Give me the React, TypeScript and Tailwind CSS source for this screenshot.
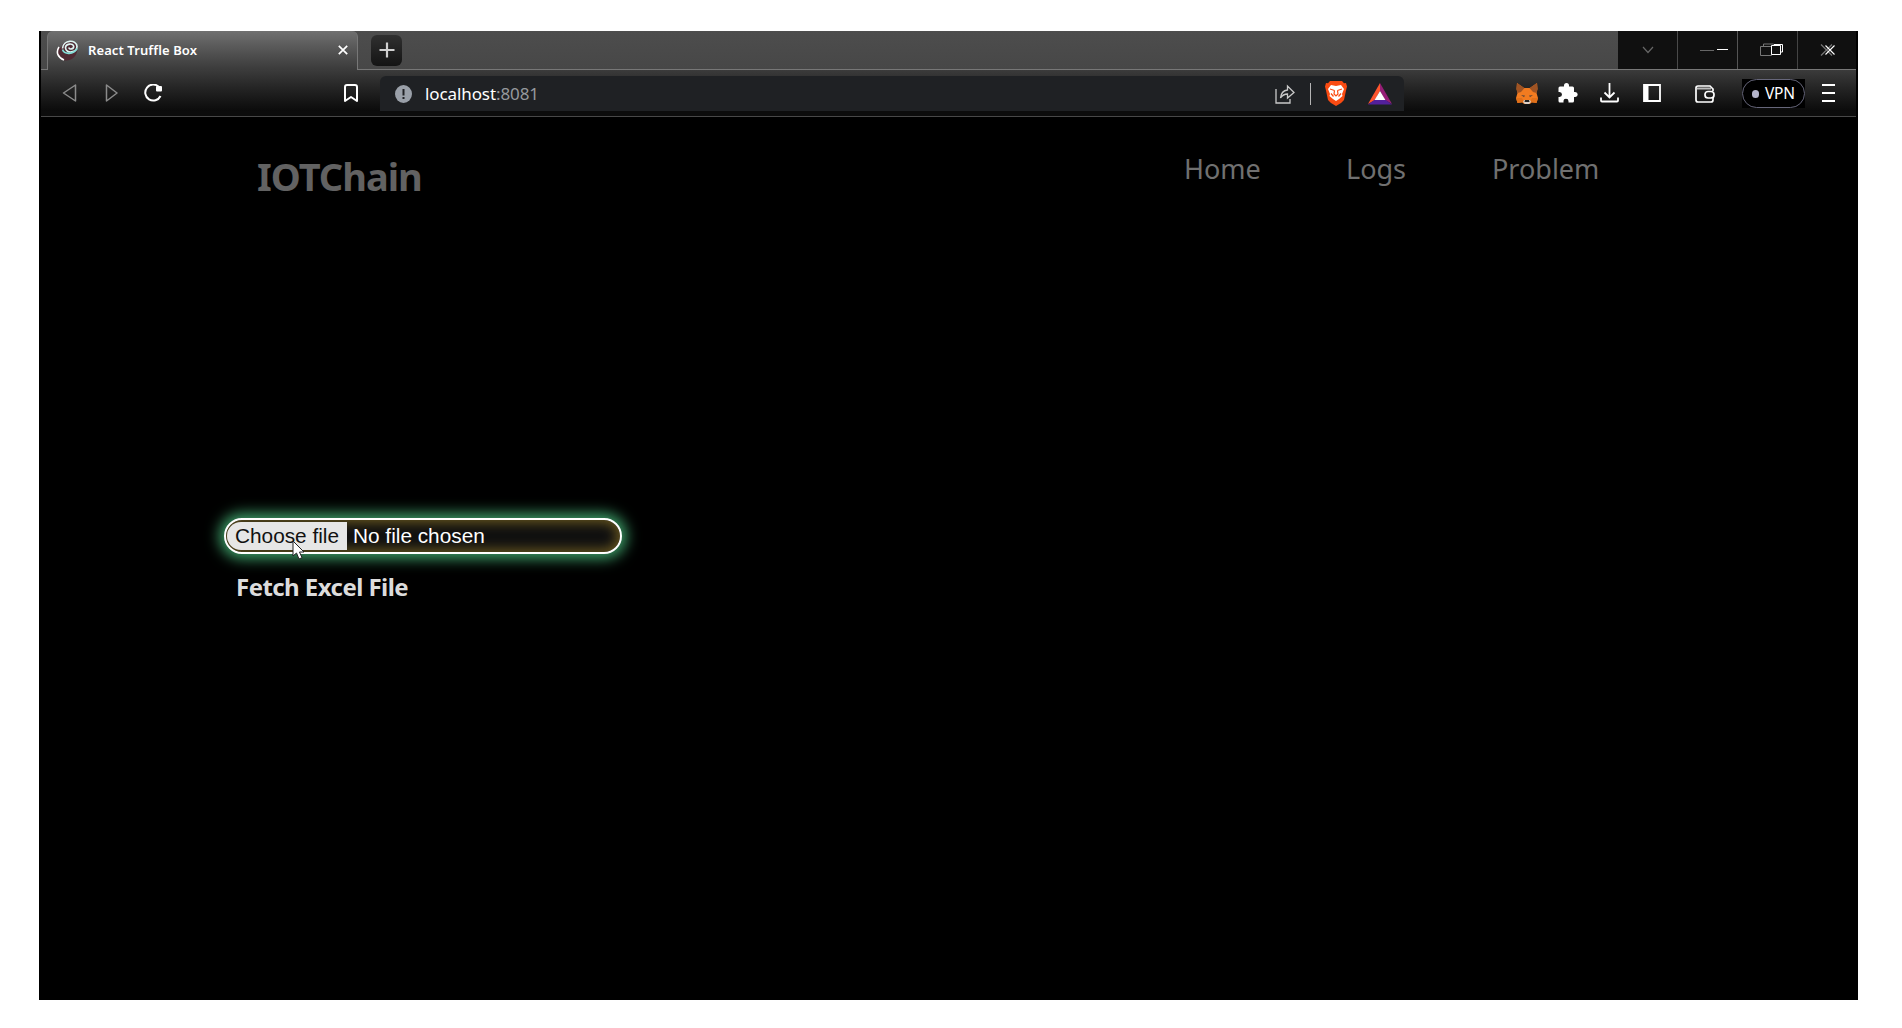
import React from "react";

const noto = "font-['Noto_Sans',sans-serif]";

function TruffleIcon() {
  return (
    <svg className="absolute left-[8px] top-[9px]" width="22" height="22" viewBox="0 0 22 22" fill="none">
      <path d="M1.500 8c-1.500 7 3.500 13 9 12.500 5 0 10-4 11-10.500l-2-5z" fill="#4f2a33" />
      <ellipse cx="13.500" cy="7.500" rx="8" ry="6.500" fill="#4f2a33" />
      <path d="M6.500 8.500c.5-9 14-9.500 14.500-2 .2 6.500-11 7.500-11.500 1.500-.3-4.500 8-5.500 8.200-1.500 0 3-4.700 3.200-4.700 1" stroke="#dff7f4" strokeWidth="1.700" />
      <path d="M6.500 9.500c2 5.500 11 5 14.500-1" stroke="#83ddd6" strokeWidth="1.700" />
      <path d="M3 7C-.5 12.500 2 17.500 8 20" stroke="#fff" strokeWidth="1.600" />
    </svg>
  );
}

function Tab() {
  return (
    <div className="relative ml-[6px] h-[39px] w-[311px] rounded-t-[6px] border-x border-[#777] bg-linear-to-b from-[#707070] to-[#3a3a3a]">
      <TruffleIcon />
      <div className="flex h-[38px] items-center justify-between pl-[40px] pr-[9px]">
        <span className={`${noto} text-[13px] font-semibold leading-none tracking-[0.1px] text-white`}>React Truffle Box</span>
        <svg width="10" height="10" viewBox="0 0 10 10" stroke="#fff" strokeWidth="1.700">
          <path d="M.8.8l8.400 8.400M9.200.8L.8 9.200" />
        </svg>
      </div>
    </div>
  );
}

function WindowControls() {
  return (
    <div className="ml-auto flex h-[38px] items-center bg-[#101010]">
      <div className="flex h-full w-[60px] items-center justify-center border-r border-[#4a4a4a]">
        <svg width="12" height="8" viewBox="0 0 12 8" fill="none" stroke="#666" strokeWidth="1.200"><path d="M1 1l5 5.500L11 1" /></svg>
      </div>
      <div className="flex h-full w-[60px] items-center justify-center border-r border-[#555] pl-[12px]">
        <svg width="30" height="6" viewBox="0 0 30 6"><path d="M1 3.500h14" stroke="#666" /><path d="M18 2.500h11" stroke="#fff" /></svg>
      </div>
      <div className="flex h-full w-[60px] items-center justify-center border-r border-[#444] pl-[8px]">
        <svg width="24" height="14" viewBox="0 0 24 14" fill="none">
          <path d="M.5 3.500h11v9H.5zM3.500 3v-2h10" stroke="#777" />
          <path d="M11.500 2.500h9v9h-9zM14 2V1.500h8.500v7.500H21" stroke="#fff" />
        </svg>
      </div>
      <div className="flex h-full w-[58px] items-center justify-center pl-[2px]">
        <svg width="17" height="12" viewBox="0 0 17 12">
          <path d="M1 .5l11 11M12 .5l-11 11" stroke="#777" strokeWidth="1.200" />
          <path d="M5.500 1.500l9 9M14.500 1.500l-9 9" stroke="#fff" strokeWidth="1.100" />
        </svg>
      </div>
    </div>
  );
}

function AddressBar() {
  return (
    <div className="flex h-[35px] w-[1024px] items-center rounded-t-[6px] bg-[#1f2124] pl-[15px]">
      <svg width="17" height="18" viewBox="0 0 17 18"><ellipse cx="8.500" cy="9" rx="8.500" ry="9" fill="#9aa0a9" /><path d="M8.500 4v6.500M8.500 12v2" stroke="#202125" strokeWidth="2" /></svg>
      <span className={`${noto} ml-[13px] inline-block w-[130px] text-[17px] leading-none tracking-[-0.1px] text-white`}>
        localhost<span className="text-[#96999d]">:8081</span>
      </span>
      <svg className="ml-[720px] mt-[1px]" width="20" height="20" viewBox="0 0 20 20" fill="none" stroke="#c9c9c9" strokeWidth="1.300">
        <path d="M1 5v14h14v-4" /><path d="M5.500 14c.5-5 3-7.500 7-8V2l6.500 6.500-6.500 5.500v-4c-3 0-5 1-7 4z" />
      </svg>
      <div className="ml-[15px] h-[22px] w-px bg-[#b5b5b5]" />
      <svg className="ml-[14px]" width="22" height="25" viewBox="0 0 22 25">
        <path d="M5 0h12l2 2.300 2-.2 1 3.400-1 4-2 9.500-3 3L11 25l-5-3-3-3L1 9.500l-1-4 1-3.400 2 .2z" fill="#fa4b12" />
        <path d="M6 4l5 1 5-1 3 4-2 5 .5 2-3.500 3L11 20l-3-2-3.500-3 .5-2-2-5z" fill="#fff" />
        <path d="M5 8l4.500 1.500M17 8l-4.500 1.500M9.500 9.500l-.5 3.500 2 2 2-2-.5-3.500M6 12.500l2.500 3M16 12.500l-2.500 3" stroke="#fa4b12" strokeWidth="1.200" fill="none" />
      </svg>
      <svg className="ml-[21px]" width="24" height="22" viewBox="0 0 24 22">
        <path d="M12 0L0 21l7-4 5-9z" fill="#ff552e" /><path d="M12 0l12 21-7-4-5-9z" fill="#961e77" /><path d="M0 21.500h24L17 16.500H7z" fill="#53209b" /><path d="M12 8l5.400 9H6.600z" fill="#fff" />
      </svg>
    </div>
  );
}

function Fox() {
  return (
    <svg className="ml-[112px]" width="22" height="21" viewBox="0 0 22 21">
      <path d="M1 0l7 5h6l7-5 .5 6-1 4 1.500 5-1.500 5-4.500-1-2 2H8l-2-2-4.500 1L0 15l1.500-5-1-4z" fill="#f27b20" />
      <path d="M1 0l7.500 5-3.500 4-3.500 1-1-4zM21 0l-7.500 5L17 9l3.500 1 1-4z" fill="#9f5323" />
      <path d="M5 12l4 .5-1 1.700zM17 12l-4 .5 1 1.700z" fill="#6b4a35" />
      <path d="M0 15h6l2 4-1 .5-5.500.5zM22 15h-6l-2 4 1 .5 5.500.5z" fill="#e0701a" />
      <path d="M8 17h6l1 2-2 2H9l-2-2z" fill="#dccfc6" /><path d="M9 17h4l.5 2h-5z" fill="#222" />
    </svg>
  );
}

function Toolbar() {
  return (
    <div className="flex h-[41px] items-center bg-linear-to-b from-[#3b3b3b] to-[#0b0b0b] pt-[6px]">
      <svg className="-mt-px ml-[21px]" width="16" height="18" viewBox="0 0 16 18" fill="none" stroke="#8b8b8b" strokeWidth="1.500" strokeLinejoin="round"><path d="M13.500 1v16L1.500 9z" /></svg>
      <svg className="-mt-px ml-[27px]" width="14" height="18" viewBox="0 0 14 18" fill="none" stroke="#8b8b8b" strokeWidth="1.500" strokeLinejoin="round"><path d="M1.500 1v16L12 9z" /></svg>
      <svg className="-mt-px ml-[25px]" width="19" height="19" viewBox="0 0 19 19" fill="none" stroke="#fff" strokeWidth="2"><path d="M15 3A8 8 0 1 0 16.500 12" /><rect x="12" y="2" width="6" height="5.500" rx="1" fill="#fff" stroke="none" /></svg>
      <svg className="-mt-px ml-[181px]" width="14" height="19" viewBox="0 0 14 19" fill="none" stroke="#fff" strokeWidth="2" strokeLinejoin="round"><path d="M1 3q0-2 2-2h8q2 0 2 2v14l-6-4-6 4z" /></svg>
      <div className="ml-[22px]"><AddressBar /></div>
      <Fox />
      <svg className="-mt-px ml-[19px]" width="21" height="20" viewBox="0 0 21 20" fill="#fff"><path d="M1.500 5q0-1.500 1.500-1.500h4V2.500a2.500 2.500 0 0 1 5 0v1h3.500q1.500 0 1.500 1.500v4h1.200a2.500 2.500 0 0 1 0 5H17v4q0 1.500-1.500 1.500h-4v-1.200a2.500 2.500 0 0 0-5 0v1.200H3q-1.500 0-1.500-1.500V14h1a2.500 2.500 0 0 0 0-5h-1z" /></svg>
      <svg className="-mt-px ml-[22px]" width="19" height="20" viewBox="0 0 19 20" fill="none" stroke="#fff" strokeWidth="1.800"><path d="M9.500 0v14M4.500 9.500l5 5 5-5M1 14.500v3q0 1 1 1h15q1 0 1-1v-3" /></svg>
      <svg className="-mt-px ml-[24px]" width="18" height="18" viewBox="0 0 18 18"><path d="M1 1h16v16H1z" fill="none" stroke="#fff" strokeWidth="1.800" /><path d="M1 1h4.500v16H1z" fill="#fff" /></svg>
      <svg className="ml-[34px]" width="20" height="18" viewBox="0 0 20 18" fill="none" stroke="#fff" strokeWidth="1.700"><path d="M18 6V4l-3-3H3Q1 1 1 3v12q0 2 2 2h13q2 0 2-2v-2" /><path d="M2 3.500h14" stroke="#bbb" strokeWidth="2" /><rect x="10" y="6.500" width="9" height="6.500" rx="3" /></svg>
      <div className="ml-[27px] flex h-[29px] w-[63px] shrink-0 bg-black">
        <div className={`${noto} flex h-full w-full items-center rounded-full border border-[#66667a] pl-[9px] text-[15.500px] leading-none tracking-[-0.2px] text-white`}>
          <span className="mr-[6px] h-[8px] w-[7px] shrink-0 rounded-full bg-[#b5b5cb]" />
          VPN
        </div>
      </div>
      <div className="-mt-px ml-[17px] flex w-[13px] shrink-0 flex-col gap-[6px]">
        <div className="h-[2px] bg-white" /><div className="h-[2px] bg-white" /><div className="h-[2px] bg-white" />
      </div>
    </div>
  );
}

function FilePicker() {
  return (
    <div className="relative ml-[183px] flex h-[36px] w-[398px] items-center overflow-visible rounded-full border-2 border-white bg-[#101010] shadow-[0_0_14px_5px_#3c9b66,inset_0_0_12px_3px_#66551f]">
      <div className="flex h-full w-full items-center overflow-hidden rounded-full font-['Liberation_Sans',sans-serif] text-[20.800px] leading-none">
        <div className="ml-[1px] flex h-[28px] w-[120px] shrink-0 items-center rounded-l-[14px] bg-[#e6e6e6] pl-[8px] text-[#111]">Choose file</div>
        <span className="ml-[6px] text-white">No file chosen</span>
      </div>
      <svg className="absolute left-[66px] top-[20px]" width="14" height="20" viewBox="0 0 14 20"><path d="M1 1v15l3.500-3 2.500 6 3-1.300L7.500 12H12z" fill="#fff" stroke="#222" /></svg>
    </div>
  );
}

export default function App() {
  return (
    <div className="h-[1028px] w-[1902px] overflow-hidden bg-white pl-[39px] pt-[31px]">
      <div className="h-[969px] w-[1819px] bg-black px-[2px]">
        <div className="flex h-[39px] border-b border-[#777] bg-linear-to-b from-[#4d4d4d] to-[#474747]">
          <Tab />
          <div className="ml-[13px] mt-[4px] flex h-[31px] w-[31px] items-center justify-center rounded-[6px] bg-linear-to-b from-[#303030] to-[#141414]">
            <svg className="-mt-[1px]" width="16" height="16" viewBox="0 0 16 16" stroke="#d0d0d0" strokeWidth="2.200"><path d="M8 .5v15M.5 8h15" /></svg>
          </div>
          <WindowControls />
        </div>
        <Toolbar />
        <div className="h-[6px] border-b border-[#484848] bg-[#0c0c0c]" />
        <header className={`${noto} flex h-[401px] items-start pl-[216px]`}>
          <h1 className="mt-[39px] w-[927px] text-[38px] font-bold leading-[40px] tracking-[-1px] text-[#626262]">IOTChain</h1>
          <nav className="mt-[36px] flex text-[27px] leading-[32px] text-[#707070]">
            <a className="w-[162px]">Home</a>
            <a className="w-[146px]">Logs</a>
            <a>Problem</a>
          </nav>
        </header>
        <main>
          <FilePicker />
          <p className={`${noto} ml-[195px] mt-[16px] text-[24px] font-bold leading-[34px] tracking-[-0.550px] text-[#dcdcdc]`}>Fetch Excel File</p>
        </main>
      </div>
    </div>
  );
}
